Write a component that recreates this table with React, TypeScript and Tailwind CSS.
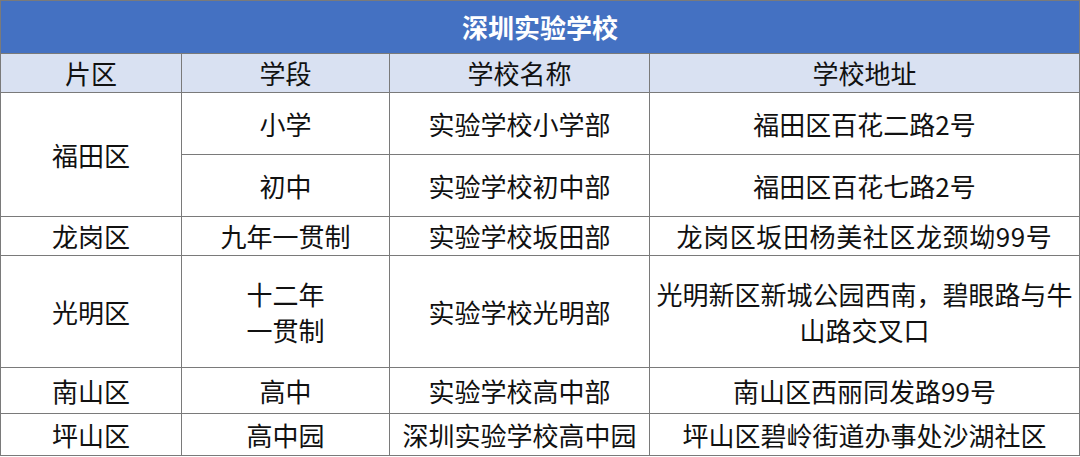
const cell = "border border-[#7a7a7a] text-center align-middle p-0 whitespace-nowrap";

export default function App() {
  return (
    <div className="w-[1080px] h-[457px] bg-white overflow-hidden">
      <table
        className="table-fixed border-collapse w-[1079px] text-[26px] leading-[36px] text-[#111]"
        style={{ fontFamily: '"Noto Sans CJK SC", "Noto Sans", sans-serif' }}
      >
        <colgroup>
          <col className="w-[181px]" />
          <col className="w-[208px]" />
          <col className="w-[260px]" />
          <col className="w-[430px]" />
        </colgroup>
        <tbody>
          <tr className="h-[53px]">
            <td colSpan={4} className={`${cell} border-[#3f4f6e] bg-[#4471c2] text-white font-bold`}>
              深圳实验学校
            </td>
          </tr>
          <tr className="h-[39px] bg-[#d9e1f2]">
            <td className={cell}>片区</td>
            <td className={cell}>学段</td>
            <td className={cell}>学校名称</td>
            <td className={cell}>学校地址</td>
          </tr>
          <tr className="h-[62px]">
            <td rowSpan={2} className={cell}>福田区</td>
            <td className={cell}>小学</td>
            <td className={cell}>实验学校小学部</td>
            <td className={cell}>福田区百花二路2号</td>
          </tr>
          <tr className="h-[62px]">
            <td className={cell}>初中</td>
            <td className={cell}>实验学校初中部</td>
            <td className={cell}>福田区百花七路2号</td>
          </tr>
          <tr className="h-[39px]">
            <td className={cell}>龙岗区</td>
            <td className={cell}>九年一贯制</td>
            <td className={cell}>实验学校坂田部</td>
            <td className={`${cell} tracking-[0.6px]`}>龙岗区坂田杨美社区龙颈坳99号</td>
          </tr>
          <tr className="h-[112px]">
            <td className={cell}>光明区</td>
            <td className={cell}>
              十二年
              <br />
              一贯制
            </td>
            <td className={cell}>实验学校光明部</td>
            <td className={cell}>
              光明新区新城公园西南，碧眼路与牛
              <br />
              山路交叉口
            </td>
          </tr>
          <tr className="h-[46px]">
            <td className={cell}>南山区</td>
            <td className={cell}>高中</td>
            <td className={cell}>实验学校高中部</td>
            <td className={cell}>南山区西丽同发路99号</td>
          </tr>
          <tr className="h-[42px]">
            <td className={cell}>坪山区</td>
            <td className={cell}>高中园</td>
            <td className={cell}>深圳实验学校高中园</td>
            <td className={cell}>坪山区碧岭街道办事处沙湖社区</td>
          </tr>
        </tbody>
      </table>
    </div>
  );
}
